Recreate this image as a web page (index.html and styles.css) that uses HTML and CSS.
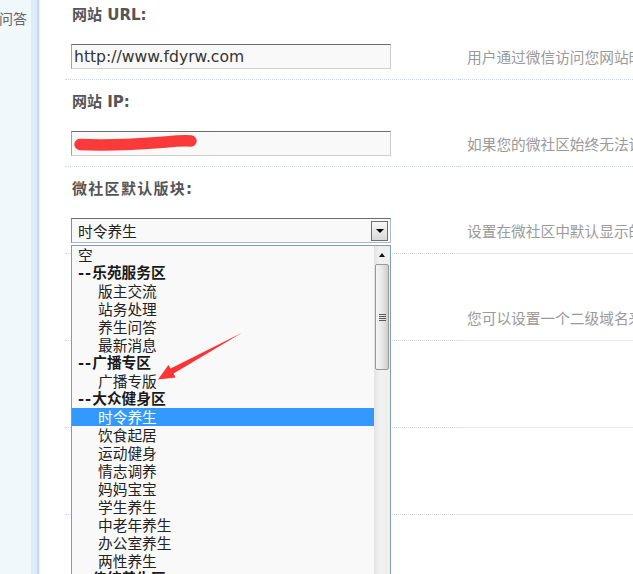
FILE: index.html
```html
<!DOCTYPE html>
<html lang="zh-CN">
<head>
<meta charset="utf-8">
<title>微社区设置</title>
<link rel="stylesheet" href="styles.css">
</head>
<body>
<div class="page">
  <aside class="sidebar">
    <div class="side-text">问答</div>
  </aside>
  <main class="main">
    <div class="row row-first">
      <div class="cell cell-field">
        <div class="label">网站 URL:</div>
        <input class="text-input" type="text" value="http://www.fdyrw.com">
      </div>
      <div class="cell cell-desc">用户通过微信访问您网站时使用的地址</div>
    </div>
    <div class="row">
      <div class="cell cell-field">
        <div class="label">网站 IP:</div>
        <div class="field-wrap">
          <input class="text-input" type="text" value="">
          <svg class="scribble" width="130" height="25" viewBox="0 0 130 25">
            <path d="M9,13.5 C40,15 70,13 95,11 C105,10 112,9.5 120,10" fill="none" stroke="#fa3a3a" stroke-width="11.5" stroke-linecap="round"/>
          </svg>
        </div>
      </div>
      <div class="cell cell-desc">如果您的微社区始终无法访问，请填写网站的IP地址</div>
    </div>
    <div class="row row-solid">
      <div class="cell cell-field">
        <div class="label label-wide">微社区默认版块:</div>
        <div class="select">
          <span class="select-value">时令养生</span>
          <span class="select-btn"><span class="tri-down"></span></span>
          <div class="dropdown">
            <div class="options">
              <div class="opt">空</div>
              <div class="opt opt-group"><span class="dash">--</span>乐苑服务区</div>
              <div class="opt opt-sub">版主交流</div>
              <div class="opt opt-sub">站务处理</div>
              <div class="opt opt-sub">养生问答</div>
              <div class="opt opt-sub">最新消息</div>
              <div class="opt opt-group"><span class="dash">--</span>广播专区</div>
              <div class="opt opt-sub">广播专版</div>
              <div class="opt opt-group"><span class="dash">--</span>大众健身区</div>
              <div class="opt opt-sub opt-selected">时令养生</div>
              <div class="opt opt-sub">饮食起居</div>
              <div class="opt opt-sub">运动健身</div>
              <div class="opt opt-sub">情志调养</div>
              <div class="opt opt-sub">妈妈宝宝</div>
              <div class="opt opt-sub">学生养生</div>
              <div class="opt opt-sub">中老年养生</div>
              <div class="opt opt-sub">办公室养生</div>
              <div class="opt opt-sub">两性养生</div>
              <div class="opt opt-group"><span class="dash">--</span>传统养生区</div>
            </div>
            <div class="scrollbar">
              <div class="sb-up"><span class="tri-up"></span></div>
              <div class="sb-thumb"><span class="grip"></span></div>
            </div>
          </div>
        </div>
      </div>
      <div class="cell cell-desc">设置在微社区中默认显示的版块</div>
    </div>
    <div class="row row-solid">
      <div class="cell cell-field"></div>
      <div class="cell cell-desc">您可以设置一个二级域名来访问微社区</div>
    </div>
    <div class="row row-solid">
      <div class="cell cell-field"></div>
      <div class="cell cell-desc"></div>
    </div>
    <div class="row row-solid">
      <div class="cell cell-field"></div>
      <div class="cell cell-desc"></div>
    </div>
    <div class="row row-solid">
      <div class="cell cell-field"></div>
      <div class="cell cell-desc"></div>
    </div>
  </main>
  <svg class="annotation" width="633" height="574" viewBox="0 0 633 574">
    <polygon points="242.5,332.5 173.6,373.6 175.6,377.6 158,379.5 168.4,365 170.6,368.6" fill="#fb3434"/>
  </svg>
</div>
</body>
</html>
```

FILE: styles.css
```css
html, body {
  margin: 0;
  padding: 0;
  background: #ffffff;
  overflow: hidden;
}

body {
  font-family: "DejaVu Sans", "Noto Sans CJK SC", sans-serif;
}

.page {
  position: relative;
  display: flex;
  height: 574px;
  overflow: hidden;
}

.sidebar {
  flex: none;
  width: 40px;
  background: linear-gradient(to right,
    #f1f8fc 0, #f1f8fc 31px,
    #ddecf8 31px, #ddecf8 37px,
    #c4dbeb 37px, #c4dbeb 39px,
    #e9f2f9 39px, #e9f2f9 40px);
}

.side-text {
  font-family: "Noto Sans CJK SC", sans-serif;
  font-size: 14px;
  line-height: 20px;
  color: #666666;
  padding-top: 8px;
  margin-left: -1px;
  white-space: nowrap;
}

.main {
  flex: 1;
  min-width: 0;
  padding-left: 25px;
}

.row {
  display: grid;
  grid-template-columns: 394px 1fr;
}

.cell {
  box-sizing: border-box;
  height: 87px;
  border-bottom: 1px dotted #c9d7e3;
}

.row-first .cell {
  height: 80px;
}

.cell-field {
  padding: 12px 0 0 6px;
}

.row-first .cell-field {
  padding-top: 5px;
}

.cell-desc {
  padding: 51px 0 0 8px;
  font-family: "Noto Sans CJK SC", sans-serif;
  font-size: 14.7px;
  line-height: 25px;
  color: #9a9a9a;
  white-space: nowrap;
  overflow: hidden;
}

.row-first .cell-desc {
  padding-top: 44px;
}

.row-solid .cell-desc {
  border-bottom: 1px solid #dde9f5;
}

.label {
  font-size: 15px;
  font-weight: bold;
  line-height: 20px;
  color: #555555;
  padding-left: 1px;
  margin-bottom: 19px;
  white-space: nowrap;
}

.label-wide {
  letter-spacing: 1.3px;
}

.field-wrap {
  position: relative;
  width: 320px;
}

.text-input {
  display: block;
  width: 320px;
  height: 25px;
  box-sizing: border-box;
  margin: 0;
  border: 1px solid;
  border-color: #6c6c6c #cdcdcd #cdcdcd #a3a3a3;
  background: #f9f9f9;
  padding: 0 0 0 2px;
  font-family: "DejaVu Sans", sans-serif;
  font-size: 15.6px;
  color: #333333;
  outline: none;
}

.scribble {
  position: absolute;
  left: 0;
  top: 0;
}

.select {
  position: relative;
  display: flex;
  align-items: center;
  width: 320px;
  height: 25px;
  box-sizing: border-box;
  border: 1px solid;
  border-color: #6c6c6c #a9b9c8 #a9b9c8 #8c8c8c;
  background: #f9f9f9;
  padding-left: 6px;
  font-family: "Noto Sans CJK SC", sans-serif;
  font-size: 14.7px;
  color: #222222;
}

.select-btn {
  margin-left: auto;
  margin-right: 2px;
  width: 17px;
  height: 20px;
  box-sizing: border-box;
  border: 1px solid #6f6f6f;
  background: linear-gradient(#f7f7f7, #d9d9d9);
  display: flex;
  align-items: center;
  justify-content: center;
}

.tri-down {
  width: 0;
  height: 0;
  border-left: 4px solid transparent;
  border-right: 4px solid transparent;
  border-top: 4px solid #000000;
  margin-top: 1px;
}

.dropdown {
  position: absolute;
  left: -1px;
  top: 26px;
  width: 320px;
  height: 340px;
  box-sizing: border-box;
  border: 1px solid #7f9db9;
  background: #f9f9f9;
  display: flex;
  z-index: 5;
}

.options {
  width: 302px;
  flex: none;
  overflow: hidden;
}

.opt {
  height: 18px;
  line-height: 18px;
  padding-left: 6px;
  font-family: "Noto Sans CJK SC", sans-serif;
  font-size: 14.7px;
  color: #222222;
  white-space: nowrap;
}

.opt-group {
  font-weight: bold;
  font-family: "DejaVu Sans", "Noto Sans CJK SC", sans-serif;
  color: #1a1a1a;
}

.dash {
  letter-spacing: 1px;
}

.opt-sub {
  padding-left: 26px;
}

.opt-selected {
  background: #3399ff;
  color: #ffffff;
}

.scrollbar {
  flex: 1;
  display: flex;
  flex-direction: column;
  align-items: center;
  background: linear-gradient(to right, #e4e4e4, #f1f1f1 40%, #eeeeee);
}

.sb-up {
  height: 17px;
  width: 100%;
  display: flex;
  align-items: center;
  justify-content: center;
}

.tri-up {
  width: 0;
  height: 0;
  border-left: 3.5px solid transparent;
  border-right: 3.5px solid transparent;
  border-bottom: 4px solid #111111;
}

.sb-thumb {
  margin-top: 1px;
  width: 14px;
  height: 106px;
  box-sizing: border-box;
  border: 1px solid #979797;
  border-radius: 2px;
  background: linear-gradient(to right, #f6f6f6, #e6e6e6 55%, #cdcdcd);
  display: flex;
  align-items: center;
  justify-content: center;
}

.grip {
  width: 7px;
  height: 7px;
  background: repeating-linear-gradient(to bottom, #5a5a5a 0, #5a5a5a 1px, transparent 1px, transparent 2px);
}

.annotation {
  position: absolute;
  left: 0;
  top: 0;
  pointer-events: none;
  z-index: 10;
}
```
